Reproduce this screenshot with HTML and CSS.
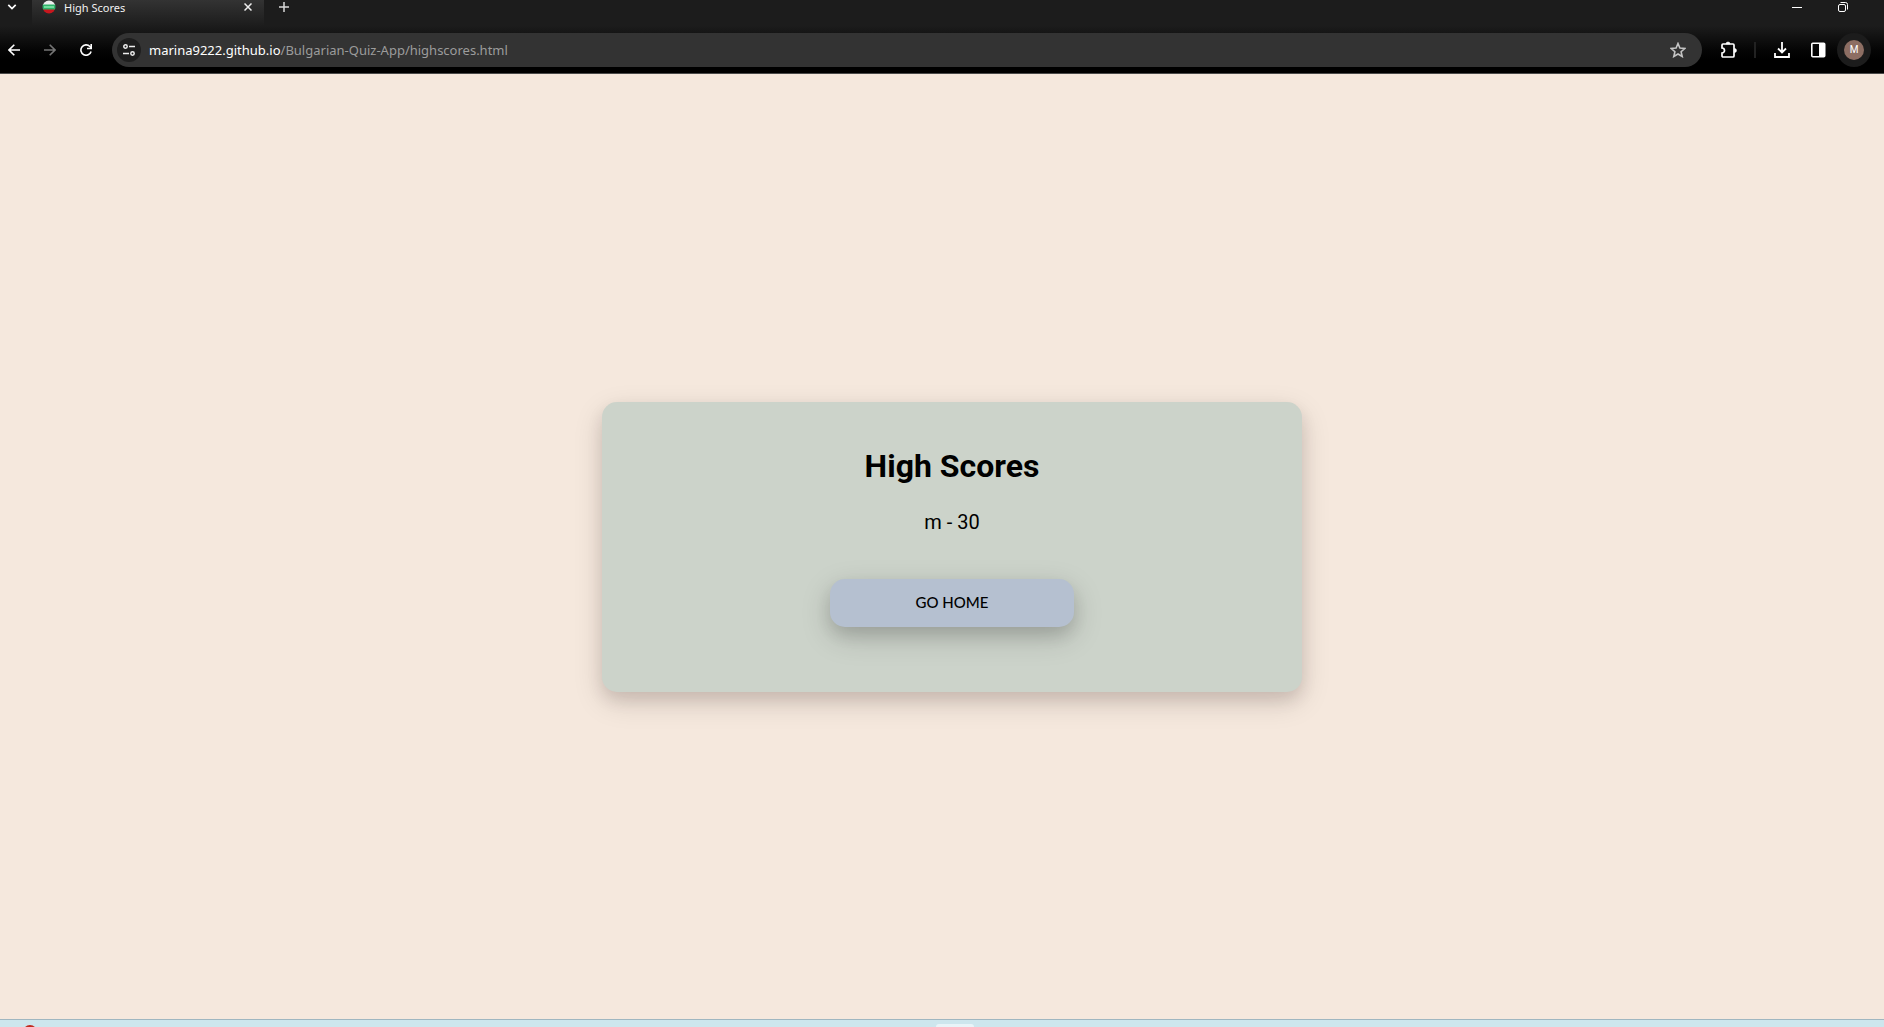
FILE: index.html
```html
<!DOCTYPE html>
<html lang="en">
<head>
<meta charset="utf-8">
<title>High Scores</title>
<link rel="stylesheet" href="styles.css">
</head>
<body>
<header class="browser">
  <div class="tabstrip">
    <button class="tab-search" aria-label="Search tabs"><svg width="10" height="6" viewBox="0 0 10 6"><path d="M1.300 .8L5 4.500 8.700 .8" fill="none" stroke="#fff" stroke-width="1.700"/></svg></button>
    <div class="tab">
      <svg class="favicon" width="14" height="14" viewBox="0 0 14 14">
        <defs><clipPath id="ball"><circle cx="7" cy="7" r="6.500"/></clipPath></defs>
        <g clip-path="url(#ball)"><path fill="#eee" d="M0 0h14v5H0z"/><path fill="#2fb36a" d="M0 4.500h14V10H0z"/><path fill="#6fdc9c" d="M2 6h10v2H2z"/><path fill="#c8171e" d="M0 9.500h14V14H0z"/></g>
      </svg>
      <span class="tab-title">High Scores</span>
      <button class="tab-close" aria-label="Close tab"><svg width="8" height="8" viewBox="0 0 8 8"><path d="M.5 .5l7 7M7.500 .5l-7 7" stroke="#eee" stroke-width="1.500"/></svg></button>
    </div>
    <button class="new-tab" aria-label="New tab"><svg width="10" height="10" viewBox="0 0 10 10"><path d="M5 0v10M0 5h10" stroke="#d8d8d8" stroke-width="1.500"/></svg></button>
    <div class="window-controls">
      <button aria-label="Minimize"><svg width="10" height="10" viewBox="0 0 10 10"><path d="M0 5.500h10" stroke="#fff"/></svg></button>
      <button aria-label="Restore"><svg width="10" height="10" viewBox="0 0 10 10" fill="none" stroke="#fff"><rect x=".5" y="2.500" width="7" height="7" rx="1.500"/><path d="M2.500 .5H7.500a2 2 0 0 1 2 2V7.500"/></svg></button>
    </div>
  </div>
  <div class="toolbar">
    <nav class="nav-buttons">
      <button aria-label="Back"><svg width="12" height="12" viewBox="0 0 12 12"><path d="M12 6H1M6.300 .7L1 6l5.300 5.300" fill="none" stroke="#fff" stroke-width="1.600"/></svg></button>
      <button aria-label="Forward"><svg width="12" height="12" viewBox="0 0 12 12"><path d="M0 6h11M5.700 .7L11 6l-5.300 5.300" fill="none" stroke="#757575" stroke-width="1.600"/></svg></button>
      <button aria-label="Reload"><svg width="12" height="12" viewBox="0 0 12 12"><path d="M11.100 7.500A5.200 5.200 0 1 1 9.900 2.500L11 3.700" fill="none" stroke="#fff" stroke-width="1.600"/><path d="M12 0v5.200H7V3.700h3.400V0z" fill="#fff"/></svg></button>
    </nav>
    <div class="address">
      <button class="site-info" aria-label="Site information"><svg width="12" height="12" viewBox="0 0 12 12" fill="none" stroke="#eee" stroke-width="1.500"><circle cx="2.500" cy="2.500" r="1.700"/><path d="M6 2.500h6M0 9.500h6"/><circle cx="9.500" cy="9.500" r="1.700"/></svg></button>
      <a class="url" href="#"><span class="host">marina9222.github.io</span>/Bulgarian-Quiz-App/highscores.html</a>
      <button class="bookmark" aria-label="Bookmark this page"><svg width="16" height="16" viewBox="0 0 16 16"><path d="M8 1.500l1.900 4.600 4.900.4-3.700 3.200 1.100 4.800L8 12l-4.200 2.500 1.100-4.800L1.200 6.500l4.900-.4z" fill="none" stroke="#c4c4c4" stroke-width="1.600"/></svg></button>
    </div>
    <div class="actions">
      <button aria-label="Extensions"><svg width="18" height="18" viewBox="0 0 18 18"><path d="M3 3H13a1 1 0 0 1 1 1V15a1 1 0 0 1-1 1H3a1 1 0 0 1-1-1v-3a2.400 2.400 0 0 0 0-5V4a1 1 0 0 1 1-1z" fill="none" stroke="#fff" stroke-width="1.700"/><path d="M6 3a2 2 0 0 1 4 0zM14.500 7.500a2 2 0 0 1 0 4z" fill="#fff" stroke="#fff" stroke-width=".6"/></svg></button>
      <span class="divider"></span>
      <button aria-label="Downloads"><svg width="16" height="16" viewBox="0 0 16 16" fill="none" stroke="#fff" stroke-width="1.800"><path d="M8 0v10M4 6.500l4 4 4-4M1 11v4h14v-4"/></svg></button>
      <button aria-label="Side panel"><svg width="16" height="16" viewBox="0 0 16 16"><rect x="1.800" y="1.300" width="12.900" height="13.400" rx="1" fill="none" stroke="#fff" stroke-width="1.600"/><path fill="#fff" d="M9 1h6v14H9z"/></svg></button>
      <button class="profile" aria-label="Profile"><span class="avatar">M</span></button>
    </div>
  </div>
</header>
<main class="page">
  <section class="card">
    <h1>High Scores</h1>
    <ul class="scores"><li>m - 30</li></ul>
    <a class="home" href="#">GO HOME</a>
  </section>
</main>
<footer class="taskbar">
  <span class="task-dot"></span>
  <span class="task-active"></span>
</footer>
</body>
</html>
```
FILE: styles.css
```css
* { box-sizing: border-box; }

body {
  margin: 0;
  height: 100vh;
  display: flex;
  flex-direction: column;
  overflow: hidden;
  background: #f5e8dd;
  font-family: Roboto, sans-serif;
}

button {
  display: flex;
  align-items: center;
  justify-content: center;
  padding: 0;
  border: 0;
  background: none;
  cursor: pointer;
}

.browser {
  border-bottom: 1px solid #4a4a4a;
  background: linear-gradient(#1c1c1c 26px, #050505 50px, #000 60px);
  font-family: "Noto Sans", sans-serif;
}

.tabstrip {
  display: flex;
  height: 26px;
  align-items: flex-start;
}

.tab-search { width: 24px; height: 14px; }

.tab {
  display: flex;
  align-items: center;
  width: 232px;
  height: 26px;
  margin-left: 8px;
  padding: 0 12px 12px 10px;
  background: linear-gradient(#333, #1c1c1c);
}

.tab-title {
  flex: 1;
  margin-left: 8px;
  color: #f2f2f2;
  font-size: 11px;
  line-height: 14px;
  padding-top: 1px;
}

.new-tab { width: 40px; height: 14px; }

.window-controls {
  display: flex;
  gap: 36px;
  height: 14px;
  margin-left: auto;
  padding-right: 36px;
}

.toolbar {
  display: flex;
  align-items: center;
  height: 47px;
  padding: 1px 13px 0 8px;
}

.nav-buttons {
  display: flex;
  gap: 24px;
  width: 104px;
}

.address {
  display: flex;
  flex: 1;
  align-items: center;
  height: 34px;
  padding: 0 16px 0 5px;
  border-radius: 17px;
  background: #333;
}

.site-info {
  width: 24px;
  height: 24px;
  border-radius: 50%;
  background: #1e1e1e;
}

.url {
  flex: 1;
  margin-left: 8px;
  color: #9c9c9c;
  font-size: 13px;
  text-decoration: none;
}

.host { color: #fff; }

.actions {
  display: flex;
  align-items: center;
  margin-left: 18px;
}

.divider {
  width: 2px;
  height: 16px;
  margin: 0 18px 0 16px;
  background: #222;
}

.actions button + button { margin-left: 20px; }

.actions .profile {
  width: 34px;
  height: 34px;
  margin-left: 11px;
  border-radius: 50%;
  background: #1c1c1c;
}

.avatar {
  width: 20px;
  height: 20px;
  border-radius: 50%;
  background: #8d6e63;
  color: #fff;
  font: 10px/20px Roboto, sans-serif;
}

.page {
  display: flex;
  flex: 1;
  align-items: center;
  justify-content: center;
  padding-left: 20px;
}

.card {
  display: flex;
  flex-direction: column;
  align-items: center;
  width: 700px;
  padding: 44px 40px 65px;
  border-radius: 15px;
  background: #ccd3ca;
  box-shadow: 0 8px 16px rgba(30, 10, 10, 0.1), 0 10px 30px rgba(30, 10, 10, 0.14);
}

h1 {
  margin: 0;
  font-size: 32px;
  line-height: 40px;
}

.scores {
  margin: 24px 0 45px;
  padding: 0;
  list-style: none;
  font-size: 20px;
  line-height: 24px;
}

.home {
  width: 244px;
  height: 48px;
  border-radius: 15px;
  background: #b5c0d0;
  box-shadow: 0 8px 16px rgba(0, 0, 0, 0.1), 0 10px 30px rgba(0, 0, 0, 0.18);
  color: #000;
  font-family: Lato, sans-serif;
  font-size: 15px;
  font-weight: 500;
  line-height: 46px;
  text-align: center;
  text-decoration: none;
}

.taskbar {
  display: flex;
  align-items: flex-end;
  justify-content: center;
  position: relative;
  height: 8px;
  padding-left: 26px;
  overflow: hidden;
  border-top: 1px solid #9fb6c0;
  background: #cde6ed;
}

.task-active {
  width: 38px;
  height: 3px;
  border-radius: 3px 3px 0 0;
  background: #e8f4f8;
}

.task-dot {
  position: absolute;
  left: 23px;
  top: 5px;
  width: 14px;
  height: 14px;
  border-radius: 50%;
  background: #c02a1e;
}
```
